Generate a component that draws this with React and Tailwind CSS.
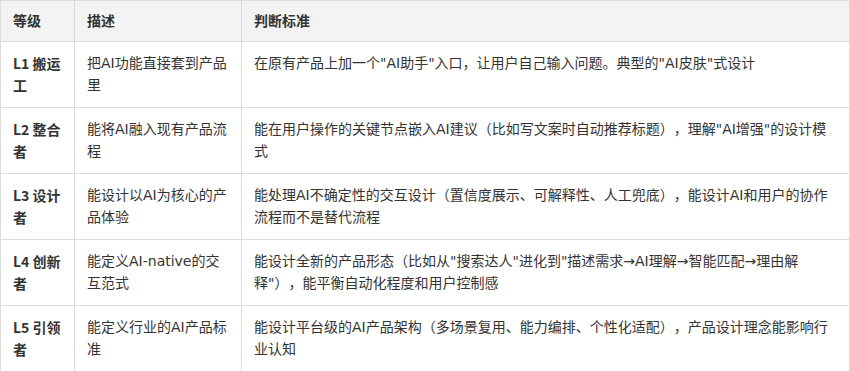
import React from 'react';

const rows = [
  {
    level: 'L1 搬运工',
    desc: '把AI功能直接套到产品里',
    rule: '在原有产品上加一个"AI助手"入口，让用户自己输入问题。典型的"AI皮肤"式设计',
  },
  {
    level: 'L2 整合者',
    desc: '能将AI融入现有产品流程',
    rule: '能在用户操作的关键节点嵌入AI建议（比如写文案时自动推荐标题），理解"AI增强"的设计模式',
  },
  {
    level: 'L3 设计者',
    desc: '能设计以AI为核心的产品体验',
    rule: '能处理AI不确定性的交互设计（置信度展示、可解释性、人工兜底），能设计AI和用户的协作流程而不是替代流程',
  },
  {
    level: 'L4 创新者',
    desc: '能定义AI-native的交互范式',
    rule: '能设计全新的产品形态（比如从"搜索达人"进化到"描述需求→AI理解→智能匹配→理由解释"），能平衡自动化程度和用户控制感',
  },
  {
    level: 'L5 引领者',
    desc: '能定义行业的AI产品标准',
    rule: '能设计平台级的AI产品架构（多场景复用、能力编排、个性化适配），产品设计理念能影响行业认知',
  },
];

const App = () => {
  return (
    <div className="w-[850px] bg-white font-['DejaVu_Sans','Noto_Sans_CJK_SC',sans-serif] text-[14px] leading-[22px] text-[#333] [text-spacing-trim:space-all]">
      <table className="w-full table-fixed border-collapse">
        <colgroup>
          <col className="w-[74px]" />
          <col className="w-[167px]" />
          <col />
        </colgroup>
        <thead>
          <tr className="bg-[#f3f3f3] h-[41px]">
            <th className="border border-[#dcdcdc] px-3 text-left font-bold">等级</th>
            <th className="border border-[#dcdcdc] px-3 text-left font-bold">描述</th>
            <th className="border border-[#dcdcdc] px-3 text-left font-bold">判断标准</th>
          </tr>
        </thead>
        <tbody>
          {rows.map((row) => (
            <tr key={row.level} className="h-[66px]">
              {/* level column uses the narrower CJK latin so "L1 搬运" stays on one line */}
              <td className="border border-[#dcdcdc] px-3 py-[10px] align-top font-bold font-['Noto_Sans_CJK_SC',sans-serif]">
                {row.level}
              </td>
              <td className="border border-[#dcdcdc] px-3 py-[10px] align-top">{row.desc}</td>
              <td className="border border-[#dcdcdc] px-3 py-[10px] align-top">{row.rule}</td>
            </tr>
          ))}
        </tbody>
      </table>
    </div>
  );
};

export default App;
